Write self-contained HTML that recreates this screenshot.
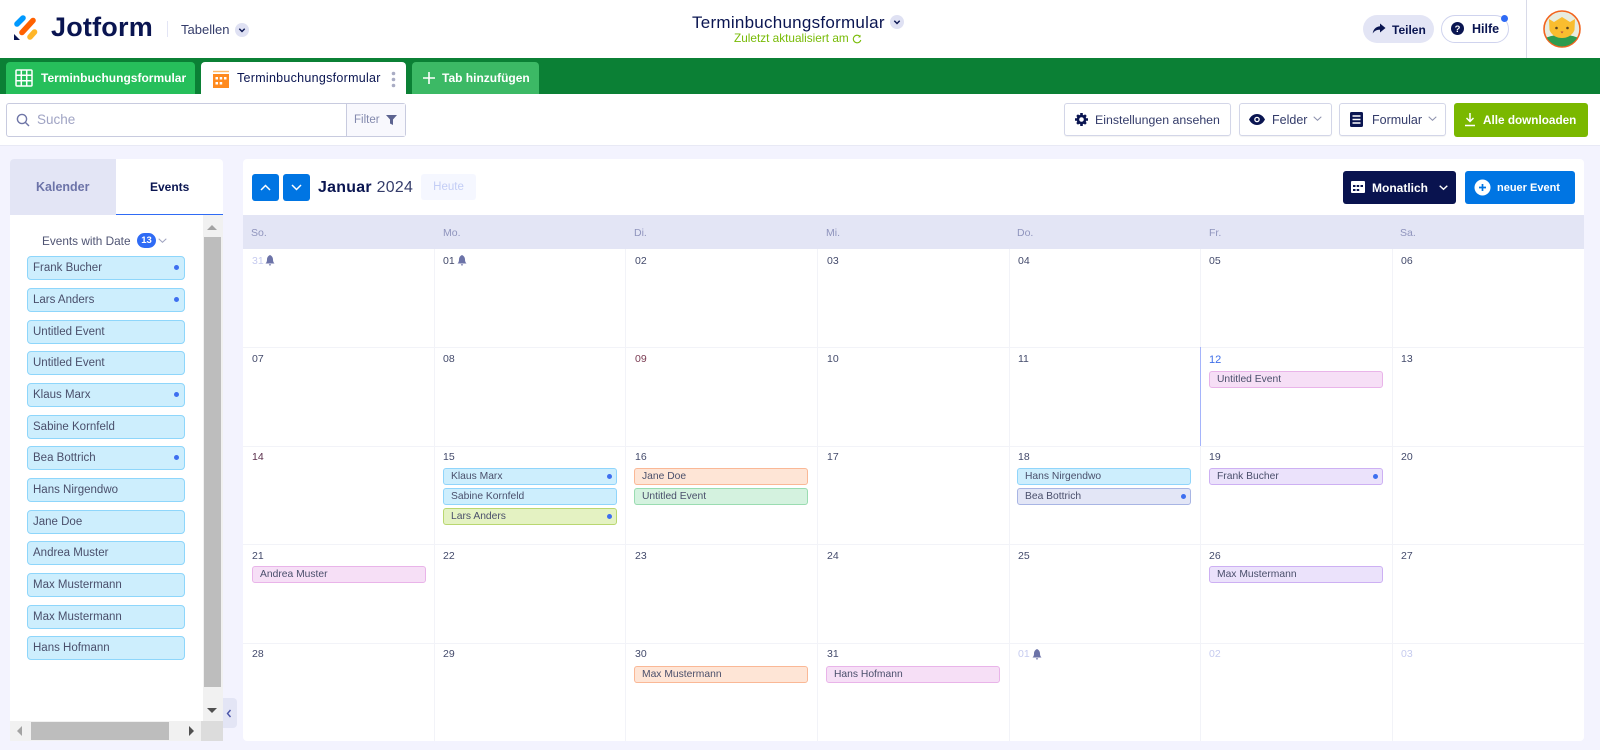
<!DOCTYPE html>
<html lang="de"><head><meta charset="utf-8"><title>Terminbuchungsformular</title>
<style>
*{box-sizing:border-box}
html,body{margin:0;padding:0;width:1600px;height:750px;overflow:hidden;background:#f3f3fe;font-family:"Liberation Sans",sans-serif;color:#0a1551}
.a{position:absolute}
.t{position:absolute;white-space:nowrap;line-height:1}
.btn{position:absolute;top:103px;height:33px;background:#fff;border:1px solid #d3d6e8;border-radius:3px;box-shadow:0 1px 1px rgba(0,0,0,.05)}
.s{position:absolute;left:27px;width:158px;height:24px;background:#cdeefd;border:1px solid #8ed6fb;border-radius:4px;font-size:11.5px;line-height:22px;padding-left:5px;color:#4a4f6b;white-space:nowrap}
.e{position:absolute;width:174px;height:17px;border:1px solid;border-radius:3px;font-size:10.3px;line-height:15px;padding-left:7px;color:#4a4f6b;white-space:nowrap}
.dot:after{content:"";position:absolute;right:4px;top:5px;width:5px;height:5px;border-radius:50%;background:#3e6ff0}
.s.dot:after{top:8px;right:5px}
.bl{background:#cdeefd;border-color:#90d5fb}
.pi{background:#f6dff6;border-color:#e9b4e9}
.or{background:#fee5d6;border-color:#fab896}
.gr{background:#d4f2df;border-color:#9adcb1}
.li{background:#e4f2c2;border-color:#b9d770}
.pu{background:#ebe2fb;border-color:#cdb0f3}
.in{background:#e3e6f6;border-color:#a8b5e4}
.d{position:absolute;font-size:10.5px;line-height:1;color:#434a6b;white-space:nowrap}
.m{color:#c6cbef}
.h{position:absolute;top:228px;font-size:10.5px;line-height:1;color:#8f94bd}
.vl{position:absolute;top:249px;width:1px;height:492px;background:#f2f3f8}
.hl{position:absolute;left:243px;width:1341px;height:1px;background:#f2f3f8}
</style></head><body>

<!-- header -->
<div class="a" style="left:0;top:0;width:1600px;height:58px;background:#fff"></div>
<svg class="a" style="left:13px;top:13px" width="26" height="28" viewBox="0 0 26 28">
<path d="M4 11 10 5" stroke="#0099ff" stroke-width="5.600" stroke-linecap="round"/>
<path d="M9 19.500 20 7.500" stroke="#ff6100" stroke-width="5.600" stroke-linecap="round"/>
<path d="M17 24 21.500 19" stroke="#ffb629" stroke-width="5.600" stroke-linecap="round"/>
<path d="M1 21V27h6z" fill="#0a1551"/></svg>
<div class="t" style="left:51px;top:14px;font-size:27px;font-weight:700;letter-spacing:.2px;color:#0a1551">Jotform</div>
<div class="a" style="left:167px;top:21px;width:1px;height:16px;background:#e3e5f5"></div>
<div class="t" style="left:181px;top:23px;font-size:13px;color:#343c6a">Tabellen</div>
<svg class="a" style="left:235px;top:23px" width="14" height="14"><circle cx="7" cy="7" r="7" fill="#dfe1f3"/><path d="M4.300 5.800 7 8.500 9.700 5.800" fill="none" stroke="#0a1551" stroke-width="1.400"/></svg>

<div class="t" style="left:692px;top:14px;font-size:17px;letter-spacing:.26px;color:#0a1551">Terminbuchungsformular</div>
<svg class="a" style="left:890px;top:15px" width="14" height="14"><circle cx="7" cy="7" r="7" fill="#dfe1f3"/><path d="M4.300 5.800 7 8.500 9.700 5.800" fill="none" stroke="#0a1551" stroke-width="1.400"/></svg>
<div class="t" style="left:734px;top:33px;font-size:11.800px;color:#78bb07">Zuletzt aktualisiert am</div>
<svg class="a" style="left:852px;top:34px" width="10" height="10"><path d="M8 2.500A3.800 3.800 0 1 0 8.800 6" fill="none" stroke="#78bb07" stroke-width="1.100"/><path d="M8.500 .8V3.400H6z" fill="#78bb07"/></svg>

<div class="a" style="left:1363px;top:15px;width:71px;height:28px;border-radius:14px;background:#e3e5f5"></div>
<svg class="a" style="left:1372px;top:23px" width="14" height="12" viewBox="0 0 14 12"><path d="M8 .5 13.500 5 8 9.500V6.800C5 6.800 2.600 7.600.7 10.500 1.200 6.500 3.800 3.500 8 3.200z" fill="#0a1551"/></svg>
<div class="t" style="left:1392px;top:24px;font-size:12px;font-weight:700;color:#0a1551">Teilen</div>
<div class="a" style="left:1441px;top:15px;width:68px;height:28px;border-radius:14px;background:#fff;border:1px solid #cfd3ee"></div>
<svg class="a" style="left:1451px;top:22px" width="13" height="13"><circle cx="6.500" cy="6.500" r="6.500" fill="#0a1551"/><text x="6.500" y="10" font-family="Liberation Sans" font-size="9.500" font-weight="700" fill="#fff" text-anchor="middle">?</text></svg>
<div class="t" style="left:1472px;top:23px;font-size:12.500px;font-weight:700;color:#0a1551">Hilfe</div>
<div class="a" style="left:1501px;top:15px;width:7px;height:7px;border-radius:50%;background:#2f6bf5"></div>
<div class="a" style="left:1526px;top:0;width:1px;height:58px;background:#d8dae8"></div>
<svg class="a" style="left:1543px;top:10px" width="38" height="38" viewBox="0 0 38 38">
<defs><clipPath id="c"><circle cx="19" cy="19" r="17.500"/></clipPath></defs>
<circle cx="19" cy="19" r="18" fill="#e8ecdf" stroke="#f2641e" stroke-width="1.600"/>
<g clip-path="url(#c)"><path d="M3 38V28C9 24 29 24 35 28V38z" fill="#2d9b4f"/>
<path d="M6 9 11 12 19 7 27 12 32 9 31.500 20C29 26 24 28 19 28 14 28 9 26 6.500 20z" fill="#f9bd2f"/>
<circle cx="13.500" cy="18" r="1.300" fill="#5b4520"/><circle cx="24.500" cy="18" r="1.300" fill="#5b4520"/>
<path d="M17.500 21.500h3l-1.500 2z" fill="#b8503b"/></g></svg>

<!-- tab bar -->
<div class="a" style="left:0;top:58px;width:1600px;height:36px;background:#0b8035"></div>
<div class="a" style="left:6px;top:62px;width:189px;height:32px;background:#26bf5b;border-radius:4px 4px 0 0"></div>
<svg class="a" style="left:15px;top:69px" width="18" height="18" viewBox="0 0 18 18" fill="none" stroke="#fff" stroke-width="1.500"><rect x="1" y="1" width="16" height="16" rx="1"/><path d="M6.300 1V17M11.700 1V17M1 6.300H17M1 11.700H17"/></svg>
<div class="t" style="left:41px;top:72px;font-size:12px;font-weight:700;color:#fff">Terminbuchungsformular</div>
<div class="a" style="left:201px;top:62px;width:205px;height:32px;background:#fff;border-radius:4px 4px 0 0"></div>
<svg class="a" style="left:212px;top:70px" width="18" height="18" viewBox="0 0 18 18"><path d="M1 1.500H17" stroke="#ffb966" stroke-width="1.400"/><rect x="1" y="4" width="16" height="14" fill="#ff8a1e"/><g fill="#fff"><rect x="3.500" y="7" width="2.500" height="2.500"/><rect x="7.700" y="7" width="2.500" height="2.500"/><rect x="12" y="7" width="2.500" height="2.500"/><rect x="3.500" y="12" width="2.500" height="2.500"/><rect x="7.700" y="12" width="2.500" height="2.500"/></g></svg>
<div class="t" style="left:237px;top:72px;font-size:12.500px;letter-spacing:.28px;color:#0a1551">Terminbuchungsformular</div>
<svg class="a" style="left:391px;top:71px" width="5" height="17"><g fill="#a9acc4"><circle cx="2.500" cy="2.500" r="1.800"/><circle cx="2.500" cy="8.500" r="1.800"/><circle cx="2.500" cy="14.500" r="1.800"/></g></svg>
<div class="a" style="left:412px;top:62px;width:127px;height:32px;background:#3cb965;border-radius:4px 4px 0 0"></div>
<svg class="a" style="left:423px;top:72px" width="12" height="12"><path d="M6 0V12M0 6H12" stroke="#fff" stroke-width="1.600"/></svg>
<div class="t" style="left:442px;top:72px;font-size:12px;font-weight:700;color:#fff">Tab hinzufügen</div>

<!-- toolbar -->
<div class="a" style="left:0;top:94px;width:1600px;height:52px;background:#fff;border-bottom:1px solid #e8e9f5"></div>
<div class="a" style="left:6px;top:103px;width:400px;height:34px;background:#fff;border:1px solid #c8cbdf;border-radius:3px"></div>
<div class="a" style="left:346px;top:104px;width:59px;height:32px;background:#f8f8fd;border-left:1px solid #c8cbdf"></div>
<svg class="a" style="left:16px;top:113px" width="14" height="14" fill="none" stroke="#6f76a7" stroke-width="1.400"><circle cx="6" cy="6" r="4.600"/><path d="M9.500 9.500 13 13"/></svg>
<div class="t" style="left:37px;top:113px;font-size:13.500px;color:#a0a4c4">Suche</div>
<div class="t" style="left:354px;top:115px;font-size:11.500px;color:#8389ad">Filter</div>
<svg class="a" style="left:386px;top:115px" width="11" height="10"><path d="M0 0H11L7 4.500V10L4 8.500V4.500z" fill="#5c6390"/></svg>

<div class="btn" style="left:1064px;width:167px"></div>
<svg class="a" style="left:1075px;top:113px" width="13" height="13" viewBox="0 0 13 13"><circle cx="6.500" cy="6.500" r="3.600" fill="none" stroke="#0a1551" stroke-width="2.600"/><path d="M5.200 0h2.600v2H5.200zM5.200 11h2.600v2H5.200zM0 5.200h2v2.600H0zM11 5.200h2v2.600h-2zM1.200 3 3 1.200 4.300 2.500 2.500 4.300zM10 1.200 11.800 3 10.500 4.300 8.700 2.500zM1.200 10 2.500 8.700 4.300 10.500 3 11.800zM10.500 8.700 11.800 10 10 11.800 8.700 10.500z" fill="#0a1551"/></svg>
<div class="t" style="left:1095px;top:114px;font-size:12.350px;color:#343c6a">Einstellungen ansehen</div>

<div class="btn" style="left:1239px;width:93px"></div>
<svg class="a" style="left:1249px;top:114px" width="16" height="11" viewBox="0 0 16 11"><path d="M8 0C4.500 0 1.700 2.200 0 5.500 1.700 8.800 4.500 11 8 11s6.300-2.200 8-5.500C14.300 2.200 11.500 0 8 0z" fill="#0a1551"/><circle cx="8" cy="5.500" r="2.800" fill="#fff"/><circle cx="8" cy="5.500" r="1.500" fill="#0a1551"/></svg>
<div class="t" style="left:1272px;top:114px;font-size:12.500px;color:#343c6a">Felder</div>
<svg class="a" style="left:1313px;top:116px" width="9" height="6"><path d="M.7.700 4.500 4.300 8.300.700" fill="none" stroke="#8d91ad" stroke-width="1"/></svg>

<div class="btn" style="left:1339px;width:107px"></div>
<svg class="a" style="left:1350px;top:112px" width="13" height="15"><rect width="13" height="15" rx="1.500" fill="#0a1551"/><path d="M2.500 4H10.500M2.500 7.500H10.500M2.500 11H10.500" stroke="#fff" stroke-width="1.500"/></svg>
<div class="t" style="left:1372px;top:114px;font-size:12.500px;color:#343c6a">Formular</div>
<svg class="a" style="left:1428px;top:116px" width="9" height="6"><path d="M.7.700 4.500 4.300 8.300.700" fill="none" stroke="#8d91ad" stroke-width="1"/></svg>

<div class="a" style="left:1454px;top:103px;width:134px;height:34px;background:#7ab800;border-radius:3px"></div>
<svg class="a" style="left:1464px;top:113px" width="12" height="14"><path d="M6 0V8M2.500 5 6 8.500 9.500 5M1 12.500H11" fill="none" stroke="#fff" stroke-width="1.500"/></svg>
<div class="t" style="left:1483px;top:115px;font-size:11.750px;font-weight:700;color:#fff">Alle downloaden</div>

<!-- left panel -->
<div class="a" style="left:10px;top:159px;width:213px;height:582px;background:#fff;border-radius:4px 4px 0 0"></div>
<div class="a" style="left:10px;top:159px;width:106px;height:56px;background:#e3e5f5;border-radius:4px 0 0 0"></div>
<div class="t" style="left:36px;top:181px;font-size:12.500px;font-weight:700;color:#6c73a8">Kalender</div>
<div class="t" style="left:150px;top:181px;font-size:12px;font-weight:700;color:#0a1551">Events</div>
<div class="a" style="left:116px;top:214px;width:107px;height:1px;background:#2f6bf5"></div>
<div class="t" style="left:42px;top:236px;font-size:11.800px;color:#4f5473">Events with Date</div>
<div class="a" style="left:137px;top:233px;width:19px;height:15px;border-radius:8px;background:#2f6bf5;color:#fff;font-size:9.500px;font-weight:700;line-height:15px;text-align:center">13</div>
<svg class="a" style="left:158px;top:238px" width="9" height="6"><path d="M.7.700 4.500 4.300 8.300.700" fill="none" stroke="#a0a4c0" stroke-width="1"/></svg>

<div class="a" style="left:203px;top:215px;width:20px;height:506px;background:#f1f1f1"></div>
<div class="a" style="left:204px;top:237px;width:17px;height:450px;background:#bdbdbd"></div>
<div class="a" style="left:207px;top:225px;width:0;height:0;border:5px solid transparent;border-top:0;border-bottom:5px solid #a3a3a3"></div>
<div class="a" style="left:207px;top:708px;width:0;height:0;border:5px solid transparent;border-bottom:0;border-top:5px solid #505050"></div>
<div class="a" style="left:10px;top:721px;width:191px;height:20px;background:#f1f1f1"></div>
<div class="a" style="left:31px;top:722px;width:138px;height:18px;background:#bdbdbd"></div>
<div class="a" style="left:17px;top:726px;width:0;height:0;border:5px solid transparent;border-left:0;border-right:5px solid #a3a3a3"></div>
<div class="a" style="left:189px;top:726px;width:0;height:0;border:5px solid transparent;border-right:0;border-left:5px solid #505050"></div>
<div class="a" style="left:201px;top:721px;width:22px;height:20px;background:#dcdcdc"></div>
<div class="a" style="left:223px;top:698px;width:14px;height:30px;background:#e3e5f5;border-radius:0 4px 4px 0"></div>
<svg class="a" style="left:226px;top:709px" width="6" height="9"><path d="M4.500 1 1.500 4.500 4.500 8" fill="none" stroke="#4a55a8" stroke-width="1.400"/></svg>

<div class="s dot" style="top:256px">Frank Bucher</div>
<div class="s dot" style="top:288px">Lars Anders</div>
<div class="s" style="top:320px">Untitled Event</div>
<div class="s" style="top:351px">Untitled Event</div>
<div class="s dot" style="top:383px">Klaus Marx</div>
<div class="s" style="top:415px">Sabine Kornfeld</div>
<div class="s dot" style="top:446px">Bea Bottrich</div>
<div class="s" style="top:478px">Hans Nirgendwo</div>
<div class="s" style="top:510px">Jane Doe</div>
<div class="s" style="top:541px">Andrea Muster</div>
<div class="s" style="top:573px">Max Mustermann</div>
<div class="s" style="top:605px">Max Mustermann</div>
<div class="s" style="top:636px">Hans Hofmann</div>

<!-- calendar -->
<div class="a" style="left:243px;top:159px;width:1341px;height:582px;background:#fff;border-radius:4px"></div>
<div class="a" style="left:252px;top:174px;width:27px;height:27px;background:#0075e3;border-radius:3px"></div>
<svg class="a" style="left:260px;top:184px" width="11" height="7"><path d="M1 6 5.500 1.500 10 6" fill="none" stroke="#fff" stroke-width="1.500"/></svg>
<div class="a" style="left:283px;top:174px;width:27px;height:27px;background:#0075e3;border-radius:3px"></div>
<svg class="a" style="left:291px;top:184px" width="11" height="7"><path d="M1 1 5.500 5.500 10 1" fill="none" stroke="#fff" stroke-width="1.500"/></svg>
<div class="t" style="left:318px;top:180px;font-size:15.900px;letter-spacing:.3px;color:#0a1551"><b style="font-weight:700">Januar</b> <span style="color:#343c6a">2024</span></div>
<div class="a" style="left:421px;top:174px;width:55px;height:26px;background:#f5f7ff;border-radius:3px;color:#c3cdf5;font-size:11.500px;line-height:27px;text-align:center">Heute</div>
<div class="a" style="left:1343px;top:171px;width:113px;height:33px;background:#09134f;border-radius:3px"></div>
<svg class="a" style="left:1351px;top:180px" width="14" height="13"><rect y="1" width="14" height="12" rx="1" fill="#fff"/><g fill="#09134f"><rect x="2" y="5" width="2.500" height="2"/><rect x="5.700" y="5" width="2.500" height="2"/><rect x="9.500" y="5" width="2.500" height="2"/><rect x="2" y="9" width="2.500" height="2"/><rect x="5.700" y="9" width="2.500" height="2"/></g></svg>
<div class="t" style="left:1372px;top:182px;font-size:12px;font-weight:700;color:#fff">Monatlich</div>
<svg class="a" style="left:1439px;top:185px" width="9" height="6"><path d="M.7.700 4.500 4.300 8.300.700" fill="none" stroke="#fff" stroke-width="1.400"/></svg>
<div class="a" style="left:1465px;top:171px;width:110px;height:33px;background:#0075e3;border-radius:3px"></div>
<svg class="a" style="left:1474px;top:179px" width="17" height="17"><circle cx="8.500" cy="8.500" r="8" fill="#fff"/><path d="M8.500 5V12M5 8.500H12" stroke="#0075e3" stroke-width="1.700"/></svg>
<div class="t" style="left:1497px;top:183px;font-size:11px;font-weight:700;color:#fff">neuer Event</div>

<div class="a" style="left:243px;top:215px;width:1341px;height:34px;background:#e3e5f5"></div>
<div class="h" style="left:251px">So.</div><div class="h" style="left:443px">Mo.</div><div class="h" style="left:634px">Di.</div><div class="h" style="left:826px">Mi.</div><div class="h" style="left:1017px">Do.</div><div class="h" style="left:1209px">Fr.</div><div class="h" style="left:1400px">Sa.</div>

<div class="vl" style="left:434px"></div><div class="vl" style="left:625px"></div><div class="vl" style="left:817px"></div><div class="vl" style="left:1009px"></div><div class="vl" style="left:1200px"></div><div class="vl" style="left:1392px"></div>
<div class="hl" style="top:347px"></div><div class="hl" style="top:446px"></div><div class="hl" style="top:544px"></div><div class="hl" style="top:643px"></div>
<div class="a" style="left:1200px;top:347px;width:1px;height:99px;background:#a5b4fb"></div>

<!-- row 1 -->
<div class="d m" style="left:252px;top:256px">31</div>
<svg class="a" style="left:265px;top:255px" width="10" height="11" viewBox="0 0 10 11"><path d="M5 0C3.200.8 2 2.300 2 4.500 2 6.500 1.500 7.500.5 8.500H9.500C8.500 7.500 8 6.500 8 4.500 8 2.300 6.800.8 5 0zM3.800 9.300H6.200L5 11z" fill="#6c73a8"/></svg>
<div class="d" style="left:443px;top:256px">01</div>
<svg class="a" style="left:457px;top:255px" width="10" height="11" viewBox="0 0 10 11"><path d="M5 0C3.200.8 2 2.300 2 4.500 2 6.500 1.500 7.500.5 8.500H9.500C8.500 7.500 8 6.500 8 4.500 8 2.300 6.800.8 5 0zM3.800 9.300H6.200L5 11z" fill="#6c73a8"/></svg>
<div class="d" style="left:635px;top:256px">02</div><div class="d" style="left:827px;top:256px">03</div><div class="d" style="left:1018px;top:256px">04</div><div class="d" style="left:1209px;top:256px">05</div><div class="d" style="left:1401px;top:256px">06</div>
<!-- row 2 -->
<div class="d" style="left:252px;top:354px">07</div><div class="d" style="left:443px;top:354px">08</div><div class="d" style="left:635px;top:354px;color:#7a3b52">09</div><div class="d" style="left:827px;top:354px">10</div><div class="d" style="left:1018px;top:354px">11</div><div class="d" style="left:1209px;top:355px;color:#3f6fe8;font-size:11px">12</div><div class="d" style="left:1401px;top:354px">13</div>
<div class="e pi" style="left:1209px;top:371px">Untitled Event</div>
<!-- row 3 -->
<div class="d" style="left:252px;top:452px;color:#5a2f4c">14</div><div class="d" style="left:443px;top:452px">15</div><div class="d" style="left:635px;top:452px">16</div><div class="d" style="left:827px;top:452px">17</div><div class="d" style="left:1018px;top:452px">18</div><div class="d" style="left:1209px;top:452px">19</div><div class="d" style="left:1401px;top:452px">20</div>
<div class="e bl dot" style="left:443px;top:468px">Klaus Marx</div>
<div class="e bl" style="left:443px;top:488px">Sabine Kornfeld</div>
<div class="e li dot" style="left:443px;top:508px">Lars Anders</div>
<div class="e or" style="left:634px;top:468px">Jane Doe</div>
<div class="e gr" style="left:634px;top:488px">Untitled Event</div>
<div class="e bl" style="left:1017px;top:468px">Hans Nirgendwo</div>
<div class="e in dot" style="left:1017px;top:488px">Bea Bottrich</div>
<div class="e pu dot" style="left:1209px;top:468px">Frank Bucher</div>
<!-- row 4 -->
<div class="d" style="left:252px;top:551px">21</div><div class="d" style="left:443px;top:551px">22</div><div class="d" style="left:635px;top:551px">23</div><div class="d" style="left:827px;top:551px">24</div><div class="d" style="left:1018px;top:551px">25</div><div class="d" style="left:1209px;top:551px">26</div><div class="d" style="left:1401px;top:551px">27</div>
<div class="e pi" style="left:252px;top:566px">Andrea Muster</div>
<div class="e pu" style="left:1209px;top:566px">Max Mustermann</div>
<!-- row 5 -->
<div class="d" style="left:252px;top:649px">28</div><div class="d" style="left:443px;top:649px">29</div><div class="d" style="left:635px;top:649px">30</div><div class="d" style="left:827px;top:649px">31</div>
<div class="d m" style="left:1018px;top:649px">01</div>
<svg class="a" style="left:1032px;top:649px" width="10" height="11" viewBox="0 0 10 11"><path d="M5 0C3.200.8 2 2.300 2 4.500 2 6.500 1.500 7.500.5 8.500H9.500C8.500 7.500 8 6.500 8 4.500 8 2.300 6.800.8 5 0zM3.800 9.300H6.200L5 11z" fill="#6c73a8"/></svg>
<div class="d m" style="left:1209px;top:649px">02</div><div class="d m" style="left:1401px;top:649px">03</div>
<div class="e or" style="left:634px;top:666px">Max Mustermann</div>
<div class="e pi" style="left:826px;top:666px">Hans Hofmann</div>
</body></html>
